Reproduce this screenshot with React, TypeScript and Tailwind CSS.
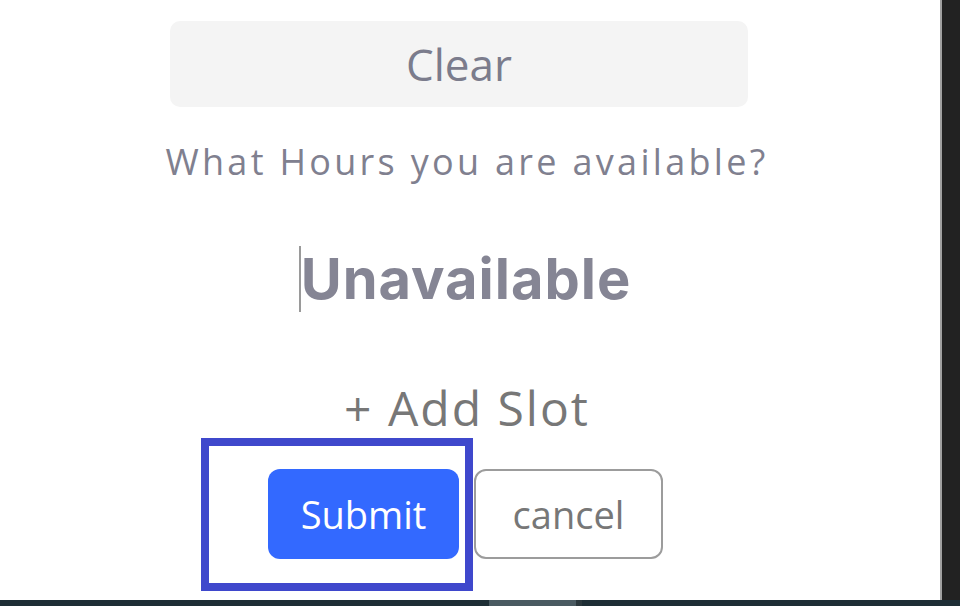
export default function App() {
  return (
    <div className="w-[960px] h-[606px] flex flex-col bg-[#1e2e35] overflow-hidden">
      <div className="flex flex-1 min-h-0">
        {/* form panel */}
        <main className="relative w-[942px] bg-white border-r-2 border-[#a0a0a0]">
          <div className="ml-[170px] w-[578px] pt-[21px] flex flex-col items-center">
            <button className="w-full h-[86px] rounded-[10px] bg-[#f4f4f4] text-[44px] text-[#7b7c8c] font-['Open_Sans',sans-serif]">
              Clear
            </button>

            <p className="mt-[37px] ml-[16px] text-[36px] leading-none tracking-[3.3px] text-[#80808f] font-['Open_Sans',sans-serif] whitespace-nowrap">
              What Hours you are available?
            </p>

            <div className="mt-[66px] ml-[12px] flex items-center">
              <span className="w-[2px] h-[66px] bg-[#9a9a9a]" />
              <span className="text-[56px] leading-none font-bold tracking-[1px] text-[#858594] font-['Inter',sans-serif]">
                Unavailable
              </span>
            </div>

            <button className="mt-[72px] ml-[16px] text-[48px] leading-none text-[#777777] tracking-[2px] font-['Open_Sans',sans-serif]">
              + Add Slot
            </button>
          </div>

          <div className="mt-[37px] ml-[268px] flex gap-[15px]">
            <button className="w-[191px] h-[90px] rounded-[12px] bg-[#3369ff] text-white text-[38px] font-['Open_Sans',sans-serif]">
              Submit
            </button>
            <button className="w-[189px] h-[90px] rounded-[12px] bg-white border-2 border-[#9c9c9c] text-[#777777] text-[38px] font-['Open_Sans',sans-serif]">
              cancel
            </button>
          </div>

          {/* annotation outline */}
          <div className="absolute left-[201px] top-[438px] w-[272px] h-[153px] border-[8px] border-[#3f48cc]" />
        </main>
        <aside className="flex-1 bg-[#222222]" />
      </div>
      <div className="h-[6px] flex">
        <div className="w-[489px] bg-[#1e2e35]" />
        <div className="w-[87px] bg-[#4a5a61]" />
        <div className="w-[6px] bg-[#2b373c]" />
        <div className="flex-1 bg-[#1e2e35]" />
      </div>
    </div>
  );
}
